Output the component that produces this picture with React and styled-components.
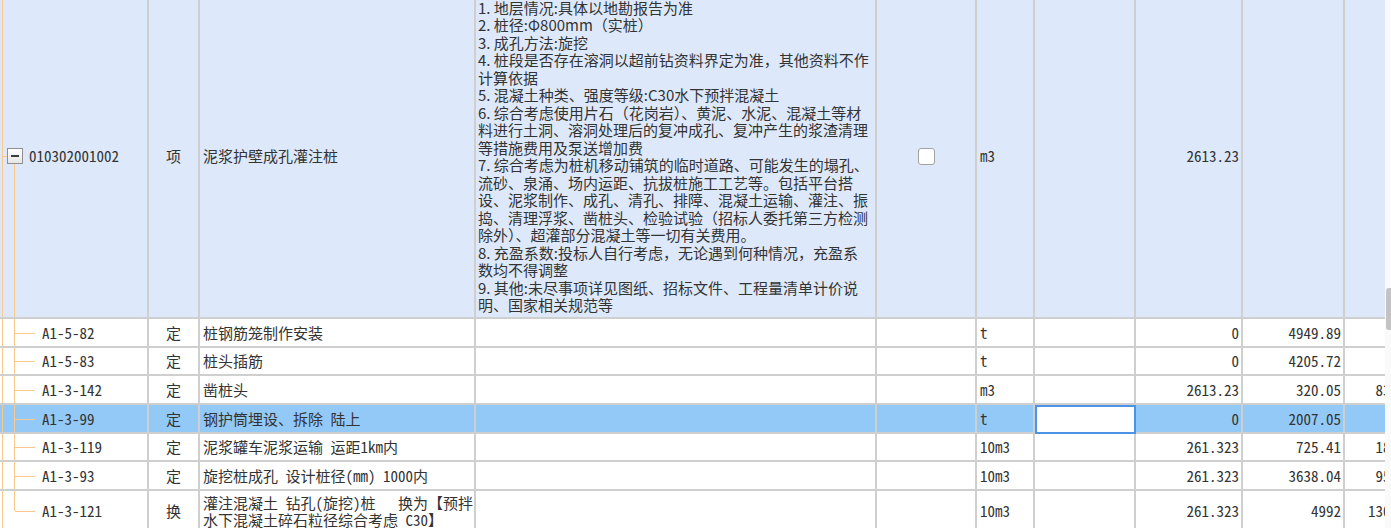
import React from "react";
import styled, { createGlobalStyle } from "styled-components";

const GlobalStyle = createGlobalStyle`
  html, body {
    margin: 0;
    padding: 0;
    background: #fff;
  }
  body {
    font-family: "Noto Sans CJK SC", "Noto Sans", sans-serif;
  }
`;

const COLS = "149px 51px 276px 401px 100px 58px 101px 107px 102px 102px";
const ORANGE = "#fbc98c";

const Screen = styled.div`
  display: flex;
  width: 1391px;
  height: 528px;
  overflow: hidden;
  background: #fff;
`;

const Viewport = styled.div`
  width: 1385px;
  height: 528px;
  overflow: hidden;
`;

const Table = styled.div`
  margin-top: -5px;
  width: 1447px;
  font-size: 15px;
  line-height: 17.5px;
  color: #333;
  font-feature-settings: "hwid" 1;
`;

const Row = styled.div`
  display: grid;
  grid-template-columns: ${COLS};
  height: ${(p) => p.$height}px;
  background: ${(p) =>
    p.$tone === "group" ? "#dde9fb" : p.$tone === "selected" ? "#93c9f6" : "#fff"};
`;

const Cell = styled.div`
  box-sizing: border-box;
  position: relative;
  display: flex;
  align-items: center;
  justify-content: ${(p) =>
    p.$align === "right" ? "flex-end" : p.$align === "center" ? "center" : "flex-start"};
  padding: 0 ${(p) => (p.$align === "right" ? 2 : 3)}px 0 ${(p) => (p.$pad ?? 3)}px;
  border-right: 2px solid #cfcfcf;
  border-bottom: 2px solid #cfcfcf;
  white-space: nowrap;
  overflow: hidden;
  ${(p) =>
    p.$editing &&
    `
    background: #fff;
    outline: 2px solid #4b93e6;
    outline-offset: -2px;
  `}
`;

const TreeCell = styled(Cell)`
  padding-left: ${(p) => (p.$depth === 0 ? 7 : 42)}px;
  gap: 6px;
`;

const Rail = styled.span`
  position: absolute;
  left: 2px;
  top: 0;
  bottom: 0;
  width: 1px;
  background: ${ORANGE};
`;

const Stem = styled.span`
  position: absolute;
  left: 14px;
  width: 1px;
  background: ${ORANGE};
  top: ${(p) => (p.$from === "box" ? "calc(50% + 8px)" : "0")};
  bottom: ${(p) => (p.$to === "mid" ? "50%" : "0")};
`;

const Branch = styled.span`
  position: absolute;
  top: 50%;
  height: 1px;
  left: ${(p) => p.$left}px;
  width: ${(p) => p.$width}px;
  background: ${ORANGE};
`;

const ExpandBox = styled.span`
  box-sizing: border-box;
  flex: none;
  width: 16px;
  height: 16px;
  border: 1px solid #8f8f8f;
  background: linear-gradient(#ffffff, #e6e6e6);
  display: flex;
  align-items: center;
  justify-content: center;
  &::after {
    content: "";
    width: 8px;
    height: 2px;
    background: #3a3a3a;
  }
`;

const CheckBox = styled.span`
  box-sizing: border-box;
  width: 17px;
  height: 17px;
  border: 1px solid #a3a3a3;
  border-radius: 3px;
  background: #fff;
`;

const Lines = styled.div`
  display: flex;
  flex-direction: column;
  font-feature-settings: ${(p) => (p.$fullWidth ? "normal" : "\"hwid\" 1")};
`;

const Line = styled.span`
  display: block;
  white-space: pre;
`;

const ScrollTrack = styled.div`
  width: 6px;
  height: 528px;
  background: #fafafa;
  display: flex;
  flex-direction: column;
  align-items: flex-end;
`;

const ScrollThumb = styled.div`
  margin-top: 288px;
  width: 5px;
  height: 42px;
  background: #c3c3c3;
  border-radius: 3px 0 0 3px;
`;

const description = [
  "1. 地层情况:具体以地勘报告为准",
  "2. 桩径:Φ800mm（实桩）",
  "3. 成孔方法:旋挖",
  "4. 桩段是否存在溶洞以超前钻资料界定为准，其他资料不作",
  "计算依据",
  "5. 混凝土种类、强度等级:C30水下预拌混凝土",
  "6. 综合考虑使用片石（花岗岩）、黄泥、水泥、混凝土等材",
  "料进行土洞、溶洞处理后的复冲成孔、复冲产生的浆渣清理",
  "等措施费用及泵送增加费",
  "7. 综合考虑为桩机移动铺筑的临时道路、可能发生的塌孔、",
  "流砂、泉涌、场内运距、抗拔桩施工工艺等。包括平台搭",
  "设、泥浆制作、成孔、清孔、排障、混凝土运输、灌注、振",
  "捣、清理浮浆、凿桩头、检验试验（招标人委托第三方检测",
  "除外）、超灌部分混凝土等一切有关费用。",
  "8. 充盈系数:投标人自行考虑，无论遇到何种情况，充盈系",
  "数均不得调整",
  "9. 其他:未尽事项详见图纸、招标文件、工程量清单计价说",
  "明、国家相关规范等",
];

const items = [
  { code: "A1-5-82", type: "定", name: ["桩钢筋笼制作安装"], unit: "t", qty: "0", price: "4949.89", total: "", height: 29 },
  { code: "A1-5-83", type: "定", name: ["桩头插筋"], unit: "t", qty: "0", price: "4205.72", total: "", height: 28 },
  { code: "A1-3-142", type: "定", name: ["凿桩头"], unit: "m3", qty: "2613.23", price: "320.05", total: "836364.26", height: 29 },
  { code: "A1-3-99", type: "定", name: ["钢护筒埋设、拆除 陆上"], unit: "t", qty: "0", price: "2007.05", total: "", height: 29, selected: true },
  { code: "A1-3-119", type: "定", name: ["泥浆罐车泥浆运输 运距1km内"], unit: "10m3", qty: "261.323", price: "725.41", total: "189566.32", height: 28 },
  { code: "A1-3-93", type: "定", name: ["旋挖桩成孔 设计桩径(mm) 1000内"], unit: "10m3", qty: "261.323", price: "3638.04", total: "950703.52", height: 29 },
  {
    code: "A1-3-121",
    type: "换",
    name: ["灌注混凝土 钻孔(旋挖)桩   换为【预拌", "水下混凝土碎石粒径综合考虑 C30】"],
    unit: "10m3",
    qty: "261.323",
    price: "4992",
    total: "1304524.42",
    height: 42,
  },
];

function GroupRow() {
  return (
    <Row $height={324} $tone="group">
      <TreeCell $depth={0}>
        <Rail />
        <Branch $left={3} $width={4} />
        <Stem $from="box" />
        <ExpandBox />
        <span>010302001002</span>
      </TreeCell>
      <Cell $align="center">项</Cell>
      <Cell>泥浆护壁成孔灌注桩</Cell>
      <Cell $pad={2}>
        <Lines $fullWidth>
          {description.map((line) => (
            <Line key={line}>{line}</Line>
          ))}
        </Lines>
      </Cell>
      <Cell $align="center">
        <CheckBox />
      </Cell>
      <Cell>m3</Cell>
      <Cell />
      <Cell $align="right">2613.23</Cell>
      <Cell $align="right" />
      <Cell $align="right" />
    </Row>
  );
}

function ItemRow({ item, last }) {
  return (
    <Row $height={item.height} $tone={item.selected ? "selected" : "plain"}>
      <TreeCell $depth={1}>
        <Rail />
        <Stem $to={last ? "mid" : undefined} />
        <Branch $left={15} $width={20} />
        <span>{item.code}</span>
      </TreeCell>
      <Cell $align="center">{item.type}</Cell>
      <Cell>
        <Lines>
          {item.name.map((line) => (
            <Line key={line}>{line}</Line>
          ))}
        </Lines>
      </Cell>
      <Cell $pad={2} />
      <Cell />
      <Cell>{item.unit}</Cell>
      <Cell $editing={item.selected} />
      <Cell $align="right">{item.qty}</Cell>
      <Cell $align="right">{item.price}</Cell>
      <Cell $align="right">{item.total}</Cell>
    </Row>
  );
}

export default function App() {
  return (
    <>
      <GlobalStyle />
      <Screen>
        <Viewport>
          <Table>
            <GroupRow />
            {items.map((item, i) => (
              <ItemRow key={item.code} item={item} last={i === items.length - 1} />
            ))}
          </Table>
        </Viewport>
        <ScrollTrack>
          <ScrollThumb />
        </ScrollTrack>
      </Screen>
    </>
  );
}
